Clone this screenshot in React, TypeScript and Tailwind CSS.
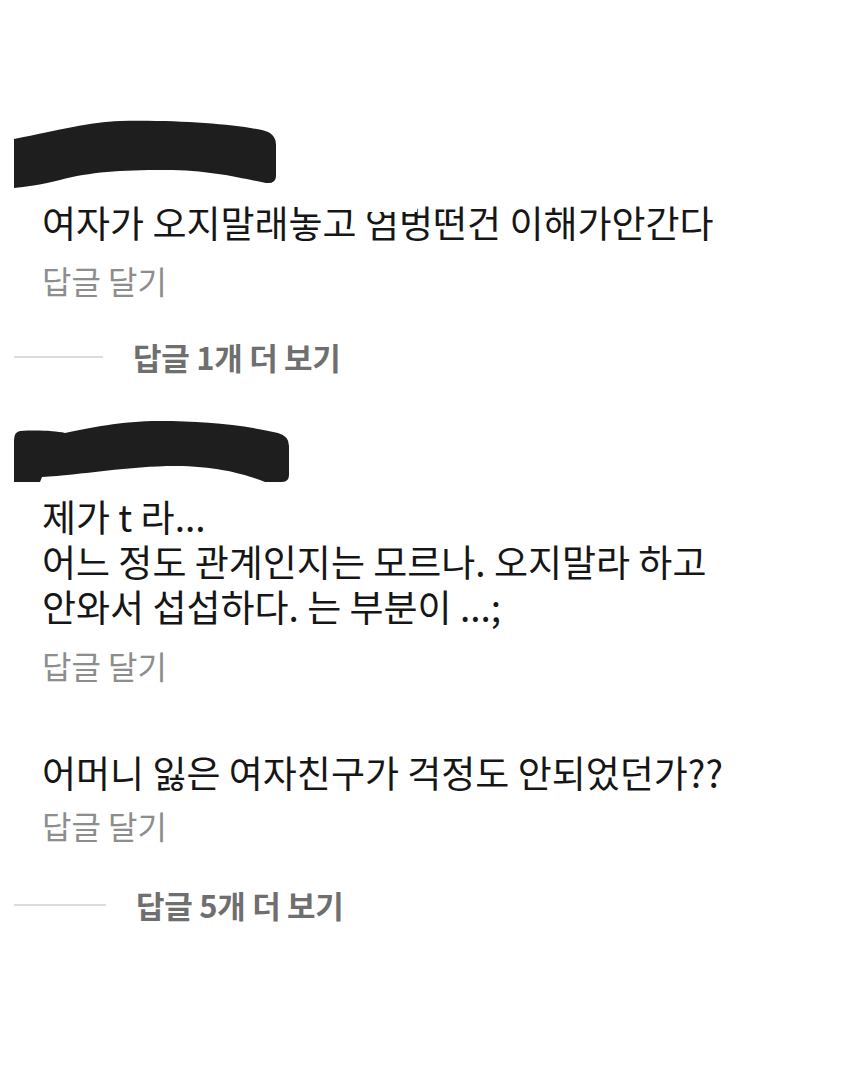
import React from "react";

const font = { fontFamily: '"Noto Sans CJK KR", "Noto Sans", sans-serif' };

function MoreReplies({ count, lineW }: { count: number; lineW: string }) {
  return (
    <div className="flex items-center h-[40px] pl-[14px]">
      <div className={`${lineW} h-[2px] bg-[#dcdcdc]`} />
      <span className="ml-[30px] text-[31px] leading-[40px] font-bold text-[#6f6f6f] tracking-[-0.3px]">
        답글 {count}개 더 보기
      </span>
    </div>
  );
}

function ReplyLink() {
  return (
    <div className="pl-[42px] text-[32px] leading-[40px] text-[#8d8d8d]">답글 달기</div>
  );
}

export default function App() {
  return (
    <div className="w-[854px] h-[1067px] bg-white flex flex-col text-[#161616]" style={font}>
      <svg className="block mt-[120px]" width="290" height="70" viewBox="0 120 290 70">
        <path
          d="M14,139 C60,130 90,122 120,121 C180,120 230,124 262,130 Q276,133 276,145 L276,176 Q276,184 266,183 C240,178 210,170 165,170 C120,170 90,172 60,180 C40,185 25,187 14,188 Z"
          fill="#1e1e1e"
        />
      </svg>
      <div className="relative mt-[10px] pl-[42px] text-[37px] leading-[44px] whitespace-nowrap">
        여자가 오지말래놓고 엄벙떤건 이해가안간다
        <div className="absolute left-[355px] top-[4px] w-[62px] h-[8px] bg-white" />
      </div>
      <div className="mt-[16px]">
        <ReplyLink />
      </div>
      <div className="mt-[37px]">
        <MoreReplies count={1} lineW="w-[89px]" />
      </div>

      <svg className="block mt-[41px]" width="300" height="68" viewBox="0 418 300 68">
        <path
          d="M20,431 Q14,432 14,440 L14,482 L40,482 L42,477 C80,475 130,466 175,466 C220,466 250,476 265,482 L282,482 Q289,482 289,475 L289,446 Q289,436 278,433 C240,424 200,421 160,421 C120,421 90,428 65,433 C55,431 40,430 20,431 Z"
          fill="#1e1e1e"
        />
      </svg>
      <div className="mt-[8px] pl-[42px] text-[37px] leading-[45px] whitespace-nowrap">
        <div>제가 t 라...</div>
        <div>어느 정도 관계인지는 모르나. 오지말라 하고</div>
        <div>안와서 섭섭하다. 는 부분이 ...;</div>
      </div>
      <div className="mt-[16px]">
        <ReplyLink />
      </div>

      <div className="mt-[65px] pl-[42px] text-[37px] leading-[44px] whitespace-nowrap">
        어머니 잃은 여자친구가 걱정도 안되었던가??
      </div>
      <div className="mt-[11px]">
        <ReplyLink />
      </div>
      <div className="mt-[40px]">
        <MoreReplies count={5} lineW="w-[92px]" />
      </div>
    </div>
  );
}
